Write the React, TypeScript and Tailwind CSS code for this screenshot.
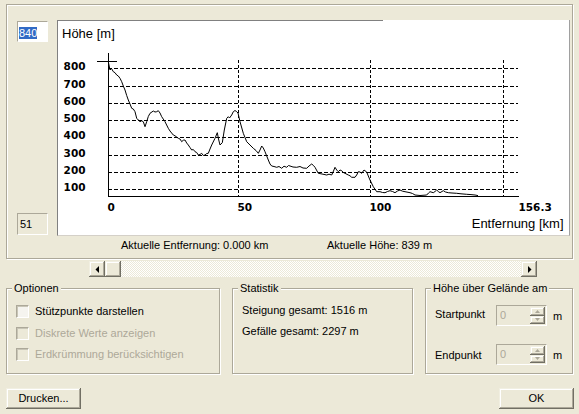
import React from 'react';

const raised =
  'bg-[#ece9d8] shadow-[inset_-1px_-1px_0_#716f64,inset_1px_1px_0_#f1efe2,inset_-2px_-2px_0_#aca899,inset_2px_2px_0_#ffffff]';
const sunken = 'border-t border-l border-[#aca899] border-r border-b border-r-white border-b-white';
const etched = 'border border-[#aca899] shadow-[inset_1px_1px_0_#ffffff,1px_1px_0_#ffffff]';

// profile trace, page coordinates
const profile: [number, number][] = [
  [108.3, 61.7], [110, 70], [111.5, 68.5], [113.3, 71.7], [115, 72.7], [116.7, 75], [118.3, 76], [120, 78.3],
  [121.7, 81.7], [123.3, 86], [125, 90], [126.7, 95.5], [128.3, 100], [130, 104], [131.7, 108.3], [133.3, 109],
  [135, 111.7], [136.7, 118.3], [138.3, 120], [140, 121.7], [141.7, 120.8], [143.3, 121.7], [145, 126.7],
  [146.7, 121.7], [148.3, 116.5], [150, 113.3], [153.3, 111], [155, 112], [156.7, 111.7], [158.3, 110.7],
  [160, 113], [161.7, 116.7], [165, 121.7], [168.3, 128.3], [170, 131], [173.3, 135], [175, 135.8],
  [178.3, 138.3], [180, 139], [181.7, 141.7], [183.3, 140.2], [185, 140], [186.7, 143], [188.3, 145],
  [190, 147.5], [191.7, 150], [193.3, 149.5], [195, 151.7], [196.7, 152.5], [198.3, 155], [200, 154.5],
  [201.7, 153.3], [203.3, 155.5], [205, 155], [206.7, 153.5], [208.3, 153.3], [210, 149], [211.7, 145],
  [215, 138.3], [217.3, 132.7], [218.5, 139], [220, 145], [222.3, 142.7], [224.3, 130], [226.7, 118.3],
  [228.3, 116.7], [229.5, 118], [231.7, 115], [233.3, 111.7], [235, 110.5], [236.7, 111.7], [238, 113],
  [240, 121.7], [243.3, 133.3], [246.7, 141.7], [250, 145], [253.3, 148.3], [256, 150.5], [258.3, 153.3],
  [260, 150], [261.7, 146], [263.3, 148], [265, 151.7], [268.3, 160], [270, 164], [271.7, 166], [274, 166.5],
  [276.7, 167.3], [279, 166.5], [281.7, 168.3], [284, 166.2], [286.7, 167.3], [288.5, 165.5], [290, 166],
  [293, 167], [296.7, 167.3], [300, 166.5], [303, 168], [306.7, 168.3], [309, 166], [311.7, 164],
  [313.5, 165.5], [315, 167.3], [318.3, 173.3], [322, 174], [326.7, 175], [329, 174.2], [331.7, 175],
  [333.5, 171], [335, 167.3], [336.7, 170], [338.3, 171.7], [340, 170], [341.7, 170.7], [343.3, 172.5],
  [345, 173.3], [348.3, 175], [350, 175.8], [351.7, 177.3], [355, 177.3], [356.7, 175], [358.3, 171.7],
  [360, 172], [361.7, 173.3], [364, 170], [366.7, 172], [368.3, 176], [370, 180], [373.3, 186.7],
  [376.7, 191.7], [380, 191.7], [382.5, 192.5], [385, 192.7], [387.5, 191.5], [390, 190.7], [392.5, 191.5],
  [395, 192.7], [397.5, 191], [400, 190], [402.5, 191.2], [405, 191.7], [410, 192.7], [412.5, 193.5],
  [415, 195], [420, 195.5], [426.7, 195], [428.5, 193], [430, 191.7], [433.3, 192.7], [435, 191.5],
  [436.7, 190], [438.3, 191.5], [440, 192.7], [443.3, 190.7], [445.5, 192], [448.3, 192.7], [452, 193],
  [456.7, 193.3], [461, 193.8], [466.7, 194.3], [471, 194.6], [475, 195], [478, 195.6],
];

const gridY = (h: number) => 68.3 + (800 - h) * 0.1729;

function Chart() {
  const heights = [800, 700, 600, 500, 400, 300, 200, 100];
  const xs = [238.5, 370.5, 503.5];
  return (
    <svg width={511} height={215} viewBox="58 20 511 215" className="block">
      <line x1={57} y1={20.5} x2={383} y2={20.5} stroke="#808080" />
      <text x={62} y={38} fontFamily="Liberation Sans, Arial, sans-serif" fontSize={13} fill="#000">
        Höhe [m]
      </text>
      {heights.map((h) => (
        <g key={h}>
          <line
            x1={108}
            x2={518}
            y1={Math.round(gridY(h)) + 0.5}
            y2={Math.round(gridY(h)) + 0.5}
            stroke="#000"
            strokeDasharray="4 2"
          />
          <text
            x={85.5}
            y={Math.round(gridY(h)) + 2}
            textAnchor="end"
            fontFamily="DejaVu Sans, Verdana, sans-serif"
            fontWeight="bold"
            fontSize={10.5}
            fill="#000"
          >
            {h}
          </text>
        </g>
      ))}
      {xs.map((x) => (
        <line key={x} x1={x} x2={x} y1={60} y2={196} stroke="#000" strokeDasharray="3 2" />
      ))}
      <polyline
        points={profile.map(([x, y]) => `${x},${y}`).join(' ')}
        fill="none"
        stroke="#000"
        strokeWidth={1}
        strokeLinejoin="round"
      />
      {/* axes */}
      <line x1={108.5} y1={53} x2={108.5} y2={197} stroke="#000" />
      <line x1={108} y1={196.5} x2={519} y2={196.5} stroke="#000" />
      <line x1={97} y1={61.5} x2={117} y2={61.5} stroke="#000" />
      {[
        { x: 107.5, t: '0' },
        { x: 237.5, t: '50' },
        { x: 369.5, t: '100' },
        { x: 518.5, t: '156.3' },
      ].map((l) => (
        <text
          key={l.t}
          x={l.x}
          y={211}
          fontFamily="DejaVu Sans, Verdana, sans-serif"
          fontWeight="bold"
          fontSize={10.5}
          fill="#000"
        >
          {l.t}
        </text>
      ))}
      <text
        x={563.5}
        y={228}
        textAnchor="end"
        fontFamily="Liberation Sans, Arial, sans-serif"
        fontSize={13}
        fill="#000"
      >
        Entfernung [km]
      </text>
    </svg>
  );
}

function Arrow({ dir }: { dir: 'left' | 'right' | 'up' | 'down' }) {
  if (dir === 'left')
    return (
      <svg width={4} height={7} viewBox="0 0 4 7">
        <path d="M4 0V7L0.5 3.5Z" fill="#000" />
      </svg>
    );
  if (dir === 'right')
    return (
      <svg width={4} height={7} viewBox="0 0 4 7">
        <path d="M0 0V7L3.5 3.5Z" fill="#000" />
      </svg>
    );
  if (dir === 'up')
    return (
      <svg width={5} height={3} viewBox="0 0 5 3">
        <path d="M0 3H5L2.5 0Z" fill="#aca899" />
      </svg>
    );
  return (
    <svg width={5} height={3} viewBox="0 0 5 3">
      <path d="M0 0H5L2.5 3Z" fill="#aca899" />
    </svg>
  );
}

function Scrollbar() {
  return (
    <div className="ml-[89px] mt-[2px] flex h-[16px] w-[448px]">
      <div className={`${raised} flex h-[16px] w-[16px] items-center justify-center pr-[1px]`}>
        <Arrow dir="left" />
      </div>
      <div className={`${raised} h-[16px] w-[16px]`} />
      <div className="flex-1 [background-image:repeating-conic-gradient(#ffffff_0%_25%,#ece9d8_0%_50%)] [background-size:2px_2px]" />
      <div className={`${raised} flex h-[16px] w-[16px] items-center justify-center pl-[1px]`}>
        <Arrow dir="right" />
      </div>
    </div>
  );
}

function Group({ title, className, children }: { title: string; className: string; children: React.ReactNode }) {
  return (
    <div className={`relative h-[86px] ${etched} ${className}`}>
      <span className="absolute -top-[7px] left-[5px] bg-[#ece9d8] px-[2px] leading-[13px]">{title}</span>
      {children}
    </div>
  );
}

function Check({ label, disabled }: { label: string; disabled?: boolean }) {
  return (
    <div className="flex h-[13px] items-center">
      <div
        className={`h-[13px] w-[13px] ${sunken} shadow-[inset_1px_1px_0_#c8c5b6] ${
          disabled ? 'bg-[#ece9d8]' : 'bg-[#f5f4ef]'
        }`}
      />
      <span className={`ml-[6px] leading-[13px] ${disabled ? 'text-[#aca899]' : 'text-black'}`}>{label}</span>
    </div>
  );
}

function Spinner() {
  return (
    <div className={`flex h-[21px] w-[51px] bg-[#ece9d8] ${sunken}`}>
      <span className="flex-1 pl-[3px] pt-[3px] leading-[13px] text-[#aca899]">0</span>
      <div className="flex w-[16px] flex-col py-[1px] pr-[1px]">
        <div className={`${raised} flex flex-1 items-center justify-center`}>
          <Arrow dir="up" />
        </div>
        <div className={`${raised} flex flex-1 items-center justify-center`}>
          <Arrow dir="down" />
        </div>
      </div>
    </div>
  );
}

export default function App() {
  return (
    <div className="flex h-[414px] w-[579px] flex-col bg-[#ece9d8] pt-[4px] font-['Liberation_Sans',Arial,sans-serif] text-[11px] text-black">
      {/* profile frame */}
      <div className={`mx-[6px] flex h-[255px] pl-[10px] pt-[15px] ${etched}`}>
        <div className="flex h-[216px] w-[31px] flex-col justify-between py-[1px]">
          <div className={`h-[21px] bg-white ${sunken} pl-[1px] pt-[3px]`}>
            <span className="bg-[#316ac5] leading-[13px] text-white">840</span>
          </div>
          <div className={`h-[22px] bg-[#ece9d8] ${sunken} pl-[2px] pt-[4px] leading-[13px]`}>51</div>
        </div>
        <div className="ml-[9px] flex flex-col">
          <div className="h-[216px] w-[513px] border-l border-r border-b border-l-[#808080] border-r-[#a0a0a0] border-b-[#d4d0c8] bg-white">
            <Chart />
          </div>
          <div className="flex pl-[64px] pt-[3px] leading-[13px]">
            <span className="w-[206px]">Aktuelle Entfernung: 0.000 km</span>
            <span>Aktuelle Höhe: 839 m</span>
          </div>
        </div>
      </div>

      <Scrollbar />

      <div className="mt-[11px] flex pl-[6px]">
        <Group title="Optionen" className="w-[214px]">
          <div className="flex flex-col gap-[8.5px] pl-[9px] pt-[16px]">
            <Check label="Stützpunkte darstellen" />
            <Check label="Diskrete Werte anzeigen" disabled />
            <Check label="Erdkrümmung berücksichtigen" disabled />
          </div>
        </Group>
        <Group title="Statistik" className="ml-[12px] w-[181px]">
          <div className="flex flex-col gap-[8px] pl-[9px] pt-[15px] leading-[13px]">
            <span>Steigung gesamt: 1516 m</span>
            <span>Gefälle gesamt: 2297 m</span>
          </div>
        </Group>
        <Group title="Höhe über Gelände am" className="ml-[12px] w-[148px]">
          <div className="flex flex-col gap-[18px] pl-[9px] pt-[16px] leading-[13px]">
            <div className="flex items-center">
              <span className="-mt-[3px] w-[61px]">Startpunkt</span>
              <Spinner />
              <span className="ml-[6px] mt-[2px]">m</span>
            </div>
            <div className="flex items-center">
              <span className="mt-[2px] w-[61px]">Endpunkt</span>
              <Spinner />
              <span className="ml-[6px] mt-[2px]">m</span>
            </div>
          </div>
        </Group>
      </div>

      <div className="mt-[14px] flex justify-between pl-[6px] pr-[5px]">
        <button className={`${raised} h-[21px] w-[75px] leading-[13px]`}>Drucken...</button>
        <button className={`${raised} h-[21px] w-[75px] leading-[13px]`}>OK</button>
      </div>
    </div>
  );
}
